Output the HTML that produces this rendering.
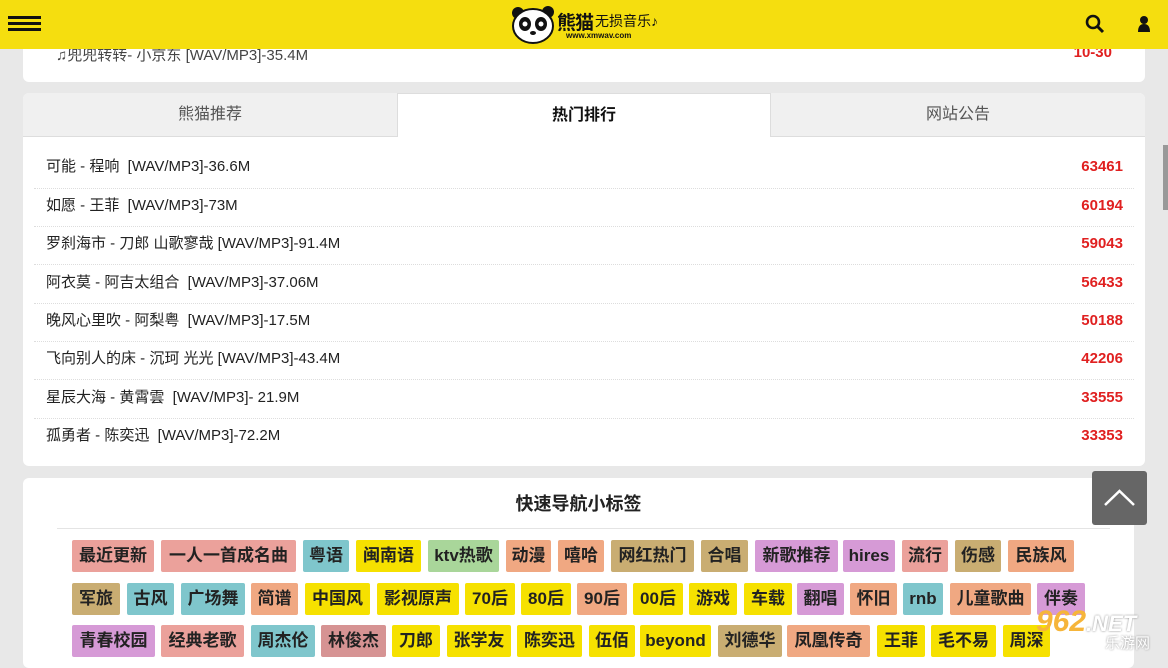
<!DOCTYPE html>
<html><head><meta charset="utf-8"><style>
*{margin:0;padding:0;box-sizing:border-box}
body{width:1168px;height:657px;overflow:hidden;background:#e8e8e8;font-family:"Liberation Sans","Noto Sans CJK SC",sans-serif;position:relative}
.hdr{position:absolute;left:0;top:0;width:1168px;height:49px;background:#f5de0f;z-index:5}
.card{position:absolute;background:#fff;border-radius:6px}
.row{position:absolute;left:46px;font-size:15px;line-height:18px;color:#222;white-space:nowrap}
.num{position:absolute;left:1060px;width:63px;text-align:right;font-size:15px;line-height:18px;color:#e02020;font-weight:bold}
.sep{position:absolute;left:34px;width:1100px;border-top:1px dotted #ddd}
.tab{position:absolute;top:0;height:44px;line-height:44px;text-align:center;font-size:16px;color:#555;background:#f0f0f0;border-bottom:1px solid #ddd}
.t{position:absolute;height:32px;line-height:32px;font-size:17px;font-weight:bold;color:#222;text-align:center;border-radius:2px;white-space:nowrap;overflow:hidden}
.p{background:#eba19b}.c{background:#7fc6cc}.y{background:#f6e100}.g{background:#a9d69a}.o{background:#f0a882}.k{background:#c9ad72}.u{background:#d69ad6}.r{background:#d69393}
</style></head><body>
<div class="hdr">
 <div style="position:absolute;left:8px;top:16px;width:33px;height:3px;background:#111;box-shadow:0 6px 0 #111,0 12px 0 #111"></div>
 <svg style="position:absolute;left:510px;top:5px" width="48" height="40" viewBox="0 0 48 40"><circle cx="8" cy="8" r="6" fill="#111"/><circle cx="38" cy="7" r="6" fill="#111"/><ellipse cx="23" cy="21" rx="20" ry="17" fill="#fff" stroke="#111" stroke-width="2"/><ellipse cx="15" cy="19" rx="6" ry="7" fill="#111"/><ellipse cx="31" cy="19" rx="6" ry="7" fill="#111"/><circle cx="15" cy="19" r="2.5" fill="#fff"/><circle cx="31" cy="19" r="2.5" fill="#fff"/><ellipse cx="23" cy="28" rx="3" ry="2" fill="#111"/></svg>
 <div style="position:absolute;left:557px;top:8px;font-size:19px;font-weight:bold;color:#111;letter-spacing:-1px">熊猫</div>
 <div style="position:absolute;left:595px;top:11px;font-size:14px;color:#111">无损音乐♪</div>
 <div style="position:absolute;left:566px;top:31px;font-size:8px;color:#111;font-weight:bold">www.xmwav.com</div>
 <svg style="position:absolute;left:1085px;top:14px" width="20" height="20" viewBox="0 0 20 20"><circle cx="8" cy="8" r="6" fill="none" stroke="#111" stroke-width="2.6"/><path d="M12.5 12.5L18 18" stroke="#111" stroke-width="3"/></svg>
 <svg style="position:absolute;left:1136px;top:15px" width="16" height="18" viewBox="0 0 16 18"><circle cx="8" cy="5" r="4" fill="#111"/><path d="M2 17Q2 9 8 9Q14 9 14 17Z" fill="#111"/></svg>
</div>
<div class="card" style="left:23px;top:20px;width:1122px;height:62px">
 <div style="position:absolute;left:33px;top:24px;font-size:15px;color:#444;white-space:nowrap">♫兜兜转转- 小京东 [WAV/MP3]-35.4M</div>
 <div style="position:absolute;right:33px;top:24px;font-size:15px;color:#e02020;font-weight:bold">10-30</div>
</div>
<div class="card" style="left:23px;top:93px;width:1122px;height:373px;overflow:hidden">
 <div class="tab" style="left:0;width:374px">熊猫推荐</div>
 <div class="tab" style="left:374px;width:374px;background:#fff;color:#111;font-weight:bold;border:1px solid #ddd;border-bottom:none">热门排行</div>
 <div class="tab" style="left:748px;width:374px">网站公告</div>
</div>
<div class="row" style="top:158px">可能 - 程响 &nbsp;[WAV/MP3]-36.6M</div><div class="num" style="top:158px">63461</div><div class="sep" style="top:188px"></div>
<div class="row" style="top:197px">如愿 - 王菲 &nbsp;[WAV/MP3]-73M</div><div class="num" style="top:197px">60194</div><div class="sep" style="top:226px"></div>
<div class="row" style="top:235px">罗刹海市 - 刀郎 山歌寥哉 [WAV/MP3]-91.4M</div><div class="num" style="top:235px">59043</div><div class="sep" style="top:264px"></div>
<div class="row" style="top:274px">阿衣莫 - 阿吉太组合 &nbsp;[WAV/MP3]-37.06M</div><div class="num" style="top:274px">56433</div><div class="sep" style="top:303px"></div>
<div class="row" style="top:312px">晚风心里吹 - 阿梨粤 &nbsp;[WAV/MP3]-17.5M</div><div class="num" style="top:312px">50188</div><div class="sep" style="top:341px"></div>
<div class="row" style="top:350px">飞向别人的床 - 沉珂 光光 [WAV/MP3]-43.4M</div><div class="num" style="top:350px">42206</div><div class="sep" style="top:379px"></div>
<div class="row" style="top:389px">星辰大海 - 黄霄雲 &nbsp;[WAV/MP3]- 21.9M</div><div class="num" style="top:389px">33555</div><div class="sep" style="top:418px"></div>
<div class="row" style="top:427px">孤勇者 - 陈奕迅 &nbsp;[WAV/MP3]-72.2M</div><div class="num" style="top:427px">33353</div>
<div class="card" style="left:23px;top:478px;width:1111px;height:190px">
 <div style="position:absolute;left:0;width:1111px;top:12px;text-align:center;font-size:18px;font-weight:bold;color:#222">快速导航小标签</div>
 <div style="position:absolute;left:34px;top:50px;width:1053px;border-top:1px solid #e4e4e4"></div>
</div>
<div class="t p" style="left:72px;top:540px;width:82px">最近更新</div>
<div class="t p" style="left:161px;top:540px;width:135px">一人一首成名曲</div>
<div class="t c" style="left:303px;top:540px;width:46px">粤语</div>
<div class="t y" style="left:356px;top:540px;width:65px">闽南语</div>
<div class="t g" style="left:428px;top:540px;width:71px">ktv热歌</div>
<div class="t o" style="left:506px;top:540px;width:45px">动漫</div>
<div class="t o" style="left:558px;top:540px;width:46px">嘻哈</div>
<div class="t k" style="left:611px;top:540px;width:83px">网红热门</div>
<div class="t k" style="left:701px;top:540px;width:47px">合唱</div>
<div class="t u" style="left:755px;top:540px;width:83px">新歌推荐</div>
<div class="t u" style="left:843px;top:540px;width:52px">hires</div>
<div class="t p" style="left:902px;top:540px;width:46px">流行</div>
<div class="t k" style="left:955px;top:540px;width:46px">伤感</div>
<div class="t o" style="left:1008px;top:540px;width:66px">民族风</div>

<div class="t k" style="left:72px;top:583px;width:48px">军旅</div>
<div class="t c" style="left:127px;top:583px;width:47px">古风</div>
<div class="t c" style="left:181px;top:583px;width:64px">广场舞</div>
<div class="t o" style="left:251px;top:583px;width:47px">简谱</div>
<div class="t y" style="left:305px;top:583px;width:65px">中国风</div>
<div class="t y" style="left:377px;top:583px;width:82px">影视原声</div>
<div class="t y" style="left:465px;top:583px;width:50px">70后</div>
<div class="t y" style="left:521px;top:583px;width:50px">80后</div>
<div class="t o" style="left:577px;top:583px;width:50px">90后</div>
<div class="t y" style="left:633px;top:583px;width:50px">00后</div>
<div class="t y" style="left:689px;top:583px;width:48px">游戏</div>
<div class="t y" style="left:744px;top:583px;width:48px">车载</div>
<div class="t u" style="left:797px;top:583px;width:47px">翻唱</div>
<div class="t o" style="left:850px;top:583px;width:47px">怀旧</div>
<div class="t c" style="left:903px;top:583px;width:40px">rnb</div>
<div class="t o" style="left:950px;top:583px;width:81px">儿童歌曲</div>
<div class="t u" style="left:1037px;top:583px;width:48px">伴奏</div>

<div class="t u" style="left:72px;top:625px;width:83px">青春校园</div>
<div class="t p" style="left:161px;top:625px;width:83px">经典老歌</div>
<div class="t c" style="left:251px;top:625px;width:64px">周杰伦</div>
<div class="t r" style="left:321px;top:625px;width:65px">林俊杰</div>
<div class="t y" style="left:392px;top:625px;width:48px">刀郎</div>
<div class="t y" style="left:447px;top:625px;width:64px">张学友</div>
<div class="t y" style="left:517px;top:625px;width:65px">陈奕迅</div>
<div class="t y" style="left:589px;top:625px;width:46px">伍佰</div>
<div class="t y" style="left:640px;top:625px;width:71px">beyond</div>
<div class="t k" style="left:718px;top:625px;width:64px">刘德华</div>
<div class="t o" style="left:787px;top:625px;width:83px">凤凰传奇</div>
<div class="t y" style="left:877px;top:625px;width:48px">王菲</div>
<div class="t y" style="left:931px;top:625px;width:65px">毛不易</div>
<div class="t y" style="left:1003px;top:625px;width:47px">周深</div>
<div style="position:absolute;left:1092px;top:471px;width:55px;height:54px;background:#666;border-radius:3px">
 <svg width="55" height="54" viewBox="0 0 55 54"><path d="M13 34L27.5 20L42 34" fill="none" stroke="#fff" stroke-width="2.5"/></svg>
</div>
<div style="position:absolute;left:1163px;top:145px;width:5px;height:65px;background:#999"></div>
<div style="position:absolute;left:1036px;top:605px;font-size:30px;font-weight:bold;color:#f6b53a;font-style:italic;white-space:nowrap">962<span style="font-size:22px;color:#fff;text-shadow:0 0 2px #888">.NET</span></div>
<div style="position:absolute;left:1105px;top:632px;font-size:15px;color:#fff;text-shadow:0 0 2px #888;white-space:nowrap">乐游网</div>
</body></html>
